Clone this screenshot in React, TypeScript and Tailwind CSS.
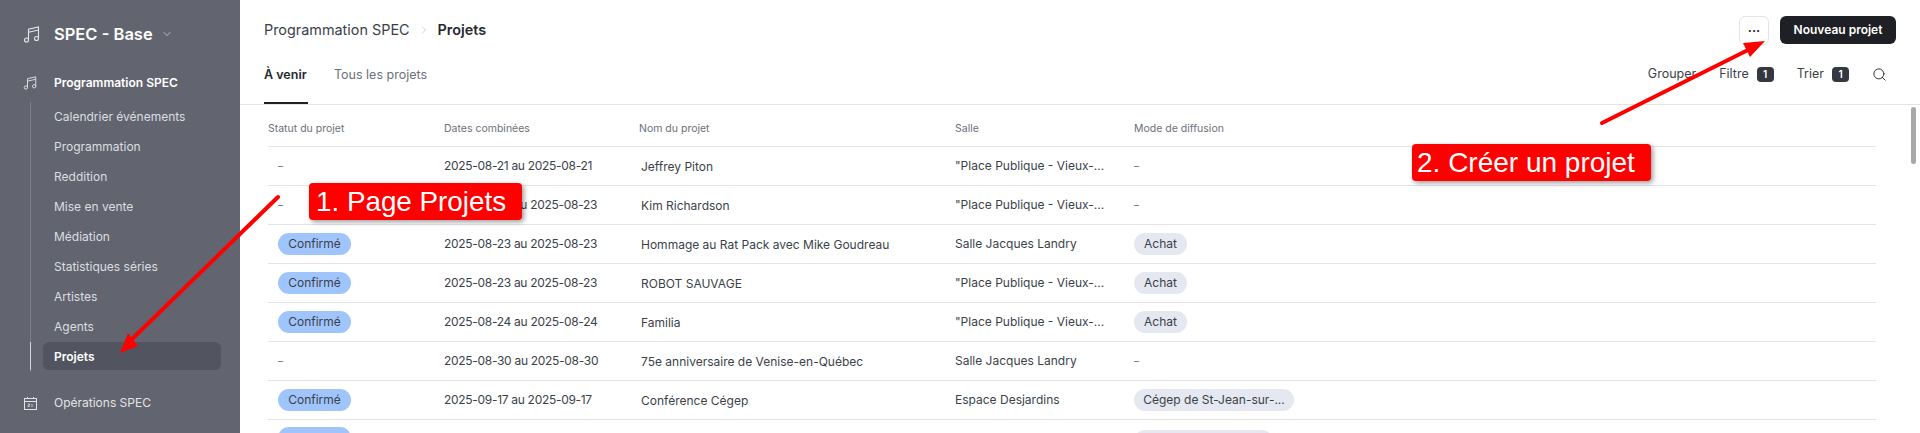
import { ChevronDown, ChevronRight, Search } from "lucide-react";

const navItems = ["Calendrier événements", "Programmation", "Reddition", "Mise en vente", "Médiation", "Statistiques séries", "Artistes", "Agents"];

const PLACE = '"Place Publique - Vieux-...';

const rows = [
  { status: false, dates: "2025-08-21 au 2025-08-21", name: "Jeffrey Piton", hall: PLACE, mode: "" },
  { status: false, dates: "2025-08-23 au 2025-08-23", name: "Kim Richardson", hall: PLACE, mode: "" },
  { status: true, dates: "2025-08-23 au 2025-08-23", name: "Hommage au Rat Pack avec Mike Goudreau", hall: "Salle Jacques Landry", mode: "Achat" },
  { status: true, dates: "2025-08-23 au 2025-08-23", name: "ROBOT SAUVAGE", hall: PLACE, mode: "Achat" },
  { status: true, dates: "2025-08-24 au 2025-08-24", name: "Familia", hall: PLACE, mode: "Achat" },
  { status: false, dates: "2025-08-30 au 2025-08-30", name: "75e anniversaire de Venise-en-Québec", hall: "Salle Jacques Landry", mode: "" },
  { status: true, dates: "2025-09-17 au 2025-09-17", name: "Conférence Cégep", hall: "Espace Desjardins", mode: "Cégep de St-Jean-sur-..." },
];

function MusicIcon({ className }: { className: string }) {
  return (
    <svg viewBox="0 0 16 17" fill="none" stroke="currentColor" strokeWidth="1.1" className={className}>
      <path d="M5 14V3.2L15 1v11.5" />
      <path d="M5 6.2 15 4" />
      <circle cx="3" cy="14" r="2" />
      <circle cx="13" cy="12.5" r="2" />
    </svg>
  );
}

function CalendarIcon() {
  return (
    <svg viewBox="0 0 13 13" fill="none" stroke="currentColor" strokeWidth="1" className="h-[13px] w-[13px]">
      <rect x="0.5" y="1.5" width="12" height="11" />
      <path d="M0.5 4.5h12M3.5 0v2M9.5 0v2" />
      <path d="M4 7h1.5v1.2H4v1.3h1.5M8 7v3" strokeWidth="0.8" />
    </svg>
  );
}

function Badge({ n }: { n: number }) {
  return <span className="flex h-[15px] w-[17px] items-center justify-center rounded-[4px] bg-[#343841] text-[10px] font-semibold text-white">{n}</span>;
}

function Pill({ text, className }: { text: string; className: string }) {
  return <span className={`inline-block h-[22px] rounded-full text-center text-[12px] leading-[22px] whitespace-nowrap text-[#3b3f49] ${className}`}>{text}</span>;
}

function Dash() {
  return <span className="text-[10px] text-[#6c707a]">–</span>;
}

export default function App() {
  return (
    <div className="relative flex h-[433px] w-[1920px] overflow-hidden bg-white font-['Inter',sans-serif]">
      <aside className="flex w-[240px] shrink-0 flex-col bg-[#62656f] text-[#e2e3e6]">
        <div className="flex h-[71px] shrink-0 items-center pb-[3px] pl-[23px]">
          <MusicIcon className="h-[17px] w-[17px] text-[#e4e5e8]" />
          <span className="ml-[14px] text-[16.5px] font-semibold text-white">SPEC - Base</span>
          <ChevronDown className="ml-[8px] h-[12px] w-[12px] text-[#ecedf0]" strokeWidth={1.25} />
        </div>
        <div className="flex h-[24px] shrink-0 items-center pl-[23px]">
          <MusicIcon className="h-[14px] w-[14px] text-[#e4e5e8]" />
          <span className="ml-[17px] text-[12px] font-semibold text-white">Programmation SPEC</span>
        </div>
        <nav className="mt-[7px] ml-[30px] flex shrink-0 flex-col border-l border-[#7d8089]">
          {navItems.map((item) => (
            <div key={item} className="flex h-[30px] items-center pl-[23px] text-[12px] text-[#dcdde1]">
              {item}
            </div>
          ))}
          <div className="relative -ml-px flex h-[30px] items-start pl-[13px]">
            <span className="absolute top-[0px] left-0 h-[28px] w-px bg-[#d5d6da]" />
            <div className="flex h-[28px] w-[178px] items-center rounded-[6px] bg-[#52555f] pt-[1px] pl-[11px] text-[12px] font-semibold text-white">Projets</div>
          </div>
        </nav>
        <div className="mt-[19px] flex h-[24px] shrink-0 items-center pl-[24px]">
          <CalendarIcon />
          <span className="ml-[17px] text-[12px] text-[#e2e3e6]">Opérations SPEC</span>
        </div>
      </aside>

      <main className="flex min-w-0 flex-1 flex-col overflow-hidden">
        <header className="flex h-[60px] shrink-0 items-center justify-between pr-[24px] pl-[24px]">
          <div className="flex items-center text-[14.4px] text-[#3b3f49]">
            <span>Programmation SPEC</span>
            <ChevronRight className="mx-[8px] h-[12px] w-[12px] text-[#b4b6bc]" strokeWidth={1.25} />
            <span className="font-semibold text-[#26282e]">Projets</span>
          </div>
          <div className="flex items-center gap-[11px]">
            <button className="flex h-[29px] w-[30px] items-center justify-center rounded-[6px] border border-[#e3e4e8] bg-white pb-[4px] text-[13px] font-semibold text-[#26282e]">...</button>
            <button className="h-[28px] w-[116px] rounded-[6px] bg-[#1f2025] text-[12px] font-semibold text-white">Nouveau projet</button>
          </div>
        </header>

        <div className="flex h-[45px] shrink-0 justify-between border-b border-[#e3e4e8] pr-[33px] pl-[24px]">
          <div className="flex gap-[26px] text-[12.5px]">
            <span className="h-[44px] w-[44px] border-b-2 border-[#1f2025] pt-[6px] font-semibold whitespace-nowrap text-[#26282e]">À venir</span>
            <span className="pt-[6px] text-[#6c707a]">Tous les projets</span>
          </div>
          <div className="flex h-[29px] items-center text-[12.5px] text-[#3b3f49]">
            <span>Grouper</span>
            <span className="ml-[23px]">Filtre</span>
            <span className="ml-[8px]"><Badge n={1} /></span>
            <span className="ml-[23px]">Trier</span>
            <span className="ml-[8px]"><Badge n={1} /></span>
            <Search className="ml-[23px] h-[15px] w-[15px] text-[#26282e]" strokeWidth={1.5} />
          </div>
        </div>

        <div className="ml-[28px] w-[1608px] shrink-0">
          <div className="flex h-[42px] items-center border-b border-[#e3e4e8] pt-[6px] text-[10.5px] text-[#6c707a]">
            <span className="w-[176px]">Statut du projet</span>
            <span className="w-[195px]">Dates combinées</span>
            <span className="w-[316px]">Nom du projet</span>
            <span className="w-[179px]">Salle</span>
            <span>Mode de diffusion</span>
          </div>
          {rows.map((r) => (
            <div key={r.name} className="flex h-[39px] items-center border-b border-[#e3e4e8] text-[12px] text-[#3b3f49]">
              <span className="w-[176px] pl-[10px]">{r.status ? <Pill text="Confirmé" className="w-[73px] bg-[#a0c5fc]" /> : <Dash />}</span>
              <span className="w-[195px] tracking-[-0.3px]">{r.dates}</span>
              <span className="w-[316px] pt-[1px] pl-[2px]">{r.name}</span>
              <span className="w-[179px]">{r.hall}</span>
              <span>{r.mode ? <Pill text={r.mode} className={`bg-[#e5e8f0] ${r.mode === "Achat" ? "w-[53px]" : "w-[160px]"}`} /> : <Dash />}</span>
            </div>
          ))}
          <div className="flex h-[39px] items-center pt-[2px]">
            <span className="w-[176px] pl-[10px]"><Pill text="" className="w-[73px] bg-[#a0c5fc]" /></span>
            <span className="w-[690px]" />
            <Pill text="" className="w-[139px] bg-[#e5e8f0]" />
          </div>
        </div>
      </main>

      {/* scrollbar */}
      <div className="absolute top-[107px] left-[1911px] h-[57px] w-[5px] rounded-full bg-[#a8a8a8]" />

      {/* annotations */}
      <svg className="pointer-events-none absolute inset-0 h-[433px] w-[1920px]" viewBox="0 0 1920 433">
        <path d="M278 197 129 342" stroke="#ff0000" strokeWidth="4" strokeLinecap="round" />
        <path d="M120 353 128 333 138 346Z" fill="#ff0000" />
        <path d="M1602 123 1752 48" stroke="#ff0000" strokeWidth="4" strokeLinecap="round" />
        <path d="M1765 41 1743 43 1750 57Z" fill="#ff0000" />
      </svg>
      <div className="absolute top-[183px] left-[309px] flex h-[37px] w-[213px] items-center rounded-[4px] bg-[#ff0000] pl-[7px] font-['Liberation_Sans',sans-serif] text-[27.8px] text-white shadow-[2px_2px_5px_rgba(0,0,0,0.4)]">1. Page Projets</div>
      <div className="absolute top-[144px] left-[1412px] flex h-[37px] w-[239px] items-center rounded-[4px] bg-[#ff0000] pl-[5px] font-['Liberation_Sans',sans-serif] text-[28px] text-white shadow-[2px_2px_5px_rgba(0,0,0,0.4)]">2. Créer un projet</div>
    </div>
  );
}
